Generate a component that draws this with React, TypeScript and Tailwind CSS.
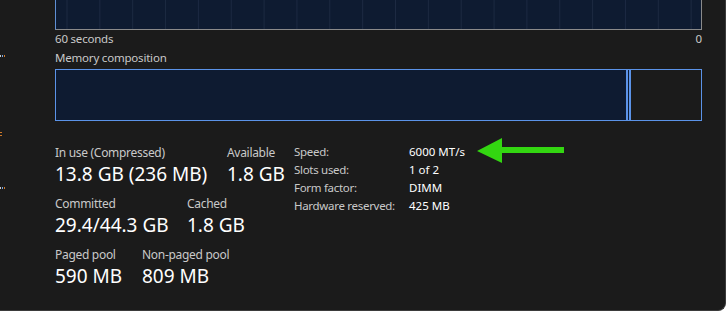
const font = { fontFamily: '"Noto Sans", "Open Sans", sans-serif' };

const hwRows = [
  { label: 'Speed:', value: '6000 MT/s' },
  { label: 'Slots used:', value: '1 of 2' },
  { label: 'Form factor:', value: 'DIMM' },
  { label: 'Hardware reserved:', value: '425 MB' },
];

function Stat({ label, value, width }: { label: string; value: string; width: string }) {
  return (
    <div className={`flex flex-col ${width}`}>
      <span className="text-[12px] leading-[16px] tracking-[-0.3px] text-[#c9c9c9]">{label}</span>
      <span className="text-[19px] leading-[26px] text-white">{value}</span>
    </div>
  );
}

export default function App() {
  const gridLines = Array.from({ length: 20 }, (_, i) => 11 + i * 32.85);

  return (
    <div
      className="relative flex w-[726px] h-[311px] overflow-hidden bg-[#1b1b1b] border-b border-r border-[#3b3b3b] rounded-br-[8px]"
      style={font}
    >
      {/* clipped sidebar */}
      <div className="w-[55px] shrink-0 relative">
        <div className="absolute left-0 top-[55px] flex gap-[1px]">
          <div className="w-[1px] h-[2px] bg-[#c9c9c9]" />
          <div className="w-[1px] h-[2px] bg-[#7aa6e0]" />
          <div className="w-[1px] h-[2px] bg-[#d07a2a]" />
        </div>
        <div className="absolute left-0 top-[132px] w-[2px] h-[1px] bg-[#d07a2a]" />
        <div className="absolute left-0 top-[135px] w-[2px] h-[1px] bg-[#d07a2a]" />
        <div className="absolute left-0 top-[187px] flex gap-[1px]">
          <div className="w-[1px] h-[2px] bg-[#c9c9c9]" />
          <div className="w-[1px] h-[2px] bg-[#7aa6e0]" />
          <div className="w-[1px] h-[2px] bg-[#d07a2a]" />
        </div>
      </div>

      <div className="w-[647px] shrink-0 flex flex-col">
        {/* graph bottom */}
        <div className="relative h-[30px] bg-[#0e1b31] border-l border-l-[#5f8fd4] border-r border-r-[#8a8a8a] border-b border-b-[#8a8a8a]">
          <svg className="absolute inset-0" width="646" height="29">
            {gridLines.map((x) => (
              <line key={x} x1={x} y1={0} x2={x} y2={29} stroke="#1d2a42" strokeWidth="1" />
            ))}
          </svg>
        </div>

        <div className="flex justify-between text-[11.5px] leading-[16px] tracking-[-0.2px] text-[#c9c9c9] mt-[1px]">
          <span>60 seconds</span>
          <span>0</span>
        </div>

        <div className="text-[11.5px] leading-[16px] tracking-[-0.2px] text-[#c9c9c9] mt-[3px]">Memory composition</div>

        <div className="mt-[3px] h-[52px] flex border border-[#5b93e8]">
          <div className="w-[572px] bg-[#0e1b31] border-r-[2px] border-[#5b93e8]" />
          <div className="w-[1px] bg-[#0e1b31]" />
          <div className="flex-1 border-l-[2px] border-[#5b93e8]" />
        </div>

        <div className="flex mt-[24px]">
          <div className="w-[239px] flex flex-col gap-[9px]">
            <div className="flex">
              <Stat label="In use (Compressed)" value="13.8 GB (236 MB)" width="w-[172px]" />
              <Stat label="Available" value="1.8 GB" width="w-[60px]" />
            </div>
            <div className="flex">
              <Stat label="Committed" value="29.4/44.3 GB" width="w-[132px]" />
              <Stat label="Cached" value="1.8 GB" width="w-[80px]" />
            </div>
            <div className="flex">
              <Stat label="Paged pool" value="590 MB" width="w-[87px]" />
              <Stat label="Non-paged pool" value="809 MB" width="w-[120px]" />
            </div>
          </div>

          <div className="flex flex-col -mt-[2px]">
            {hwRows.map(({ label, value }) => (
              <div key={label} className="flex text-[11.5px] leading-[18px] text-[#c9c9c9]">
                <span className="w-[115px] tracking-[-0.3px]">{label}</span>
                <span className="text-white">{value}</span>
              </div>
            ))}
          </div>
        </div>
      </div>

      {/* annotation arrow */}
      <svg className="absolute left-[476px] top-[137px]" width="92" height="27" viewBox="0 0 92 27">
        <polygon points="1,14 26,1 26,10 88,10 88,16 26,16 26,26" fill="#33d611" />
      </svg>
    </div>
  );
}
